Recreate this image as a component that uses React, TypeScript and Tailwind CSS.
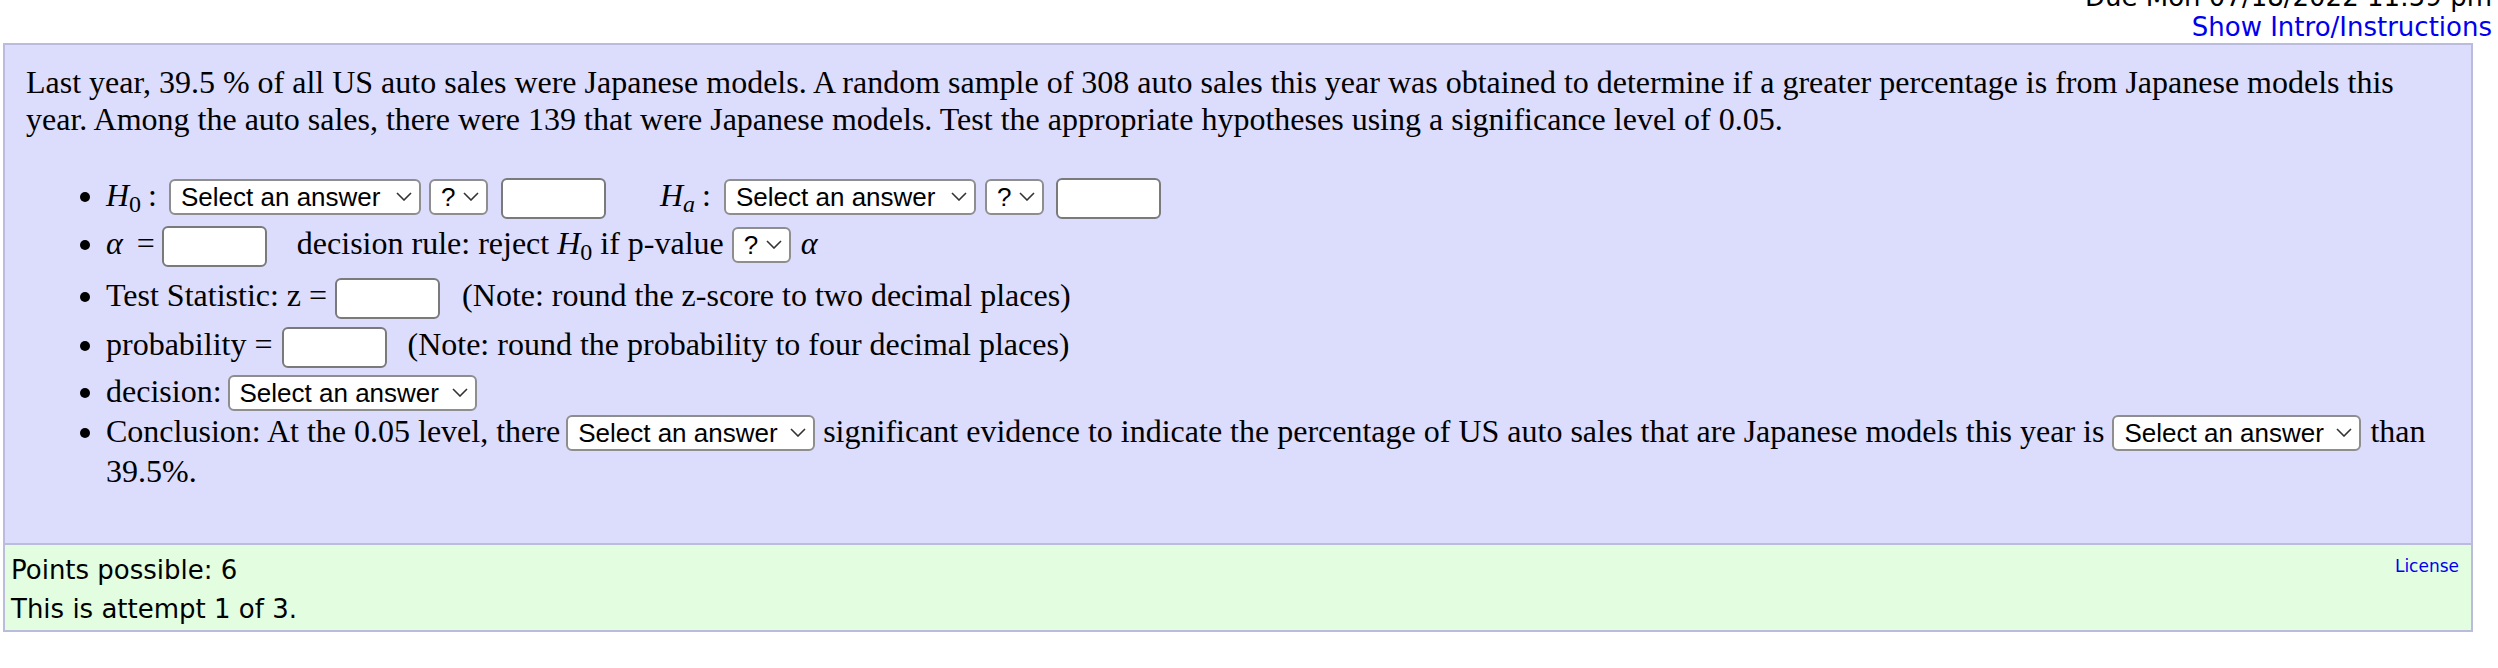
const serif = "font-['Liberation_Serif','Times_New_Roman',serif]"

function Chevron() {
  return (
    <svg width="16" height="9" viewBox="0 0 16 9" className="shrink-0">
      <polyline points="1,1 8,8 15,1" fill="none" stroke="#333" strokeWidth="1.6" />
    </svg>
  )
}

// mac-style select box, baseline aligned with the text around it
function Select({ q = false, wide = false, className = '' }: { q?: boolean; wide?: boolean; className?: string }) {
  const w = q ? 'w-[59px]' : wide ? 'w-[252px]' : 'w-[249px]'
  return (
    <span
      className={`inline-flex h-[36px] items-center justify-between rounded-[6px] border-2 border-[#8e8e8e] bg-white pl-[10px] pr-[7px] font-['Liberation_Sans',Arial,sans-serif] text-[26px] leading-[30px] text-black ${w} ${className}`}
    >
      <span>{q ? '?' : 'Select an answer'}</span>
      <Chevron />
    </span>
  )
}

function Input({ className = '' }: { className?: string }) {
  return (
    <span
      className={`inline-block h-[41px] w-[105px] rounded-[6px] border-2 border-[#7a7a7a] bg-white align-[-13px] ${className}`}
    />
  )
}

export default function App() {
  return (
    <div className="min-h-[668px] bg-white font-['DejaVu_Sans',Verdana,sans-serif] text-black">
      {/* header, scrolled so the due date is mostly cut off */}
      <div className="-mt-[18px] pr-[6px] text-right text-[26px] leading-[30px]">
        <div>Due Mon 07/18/2022 11:59 pm</div>
        <a className="text-[#0000ee]">Show Intro/Instructions</a>
      </div>

      <div className="ml-[3px] mt-[1px] w-[2470px]">
        {/* question */}
        <div className={`border-2 border-[#bbbbdd] bg-[#dcdcfc] pb-[52px] pl-[21px] pr-[21px] pt-[19px] text-[32px] ${serif}`}>
          <p className="leading-[36.8px]">
            Last year, 39.5 % of all US auto sales were Japanese models. A random sample of 308 auto sales this year
            was obtained to determine if a greater percentage is from Japanese models this year. Among the auto sales,
            there were 139 that were Japanese models. Test the appropriate hypotheses using a significance level of
            0.05.
          </p>

          <ul className="mt-[39px] list-disc pl-[80px]">
            <li className="leading-[36px]">
              <span className="italic">H</span><sub>0</sub><span className="ml-[7px]">:</span>
              <Select wide className="ml-[12px]" />
              <Select q className="ml-[8px]" />
              <Input className="ml-[13px]" />
              <span className="ml-[54px] italic">H</span><sub className="italic">a</sub><span className="ml-[7px]">:</span>
              <Select wide className="ml-[13px]" />
              <Select q className="ml-[9px]" />
              <Input className="ml-[12px]" />
            </li>
            <li className="mt-[6px] leading-[36px]">
              <span className="italic">α</span><span className="ml-[14px]">=</span>
              <Input className="ml-[7px]" />
              <span className="ml-[30px]">
                decision rule: reject <span className="italic">H</span><sub>0</sub> if p-value
              </span>
              <Select q className="ml-[8px]" />
              <span className="ml-[10px] italic">α</span>
            </li>
            <li className="mt-[10px] leading-[36px]">
              Test Statistic: z =
              <Input className="ml-[8px]" />
              <span className="ml-[22px]">(Note: round the z-score to two decimal places)</span>
            </li>
            <li className="mt-[7px] leading-[36px]">
              probability =
              <Input className="ml-[10px]" />
              <span className="ml-[20px]">(Note: round the probability to four decimal places)</span>
            </li>
            <li className="mt-[5px] leading-[36px]">
              decision:
              <Select className="ml-[6px]" />
            </li>
            <li className="leading-[40px]">
              Conclusion: At the 0.05 level, there
              <Select className="ml-[6px]" />
              <span className="ml-[8px]">
                significant evidence to indicate the percentage of US auto sales that are Japanese models this year is
              </span>
              <Select className="ml-[8px]" />
              <span className="ml-[9px]">than</span> 39.5%.
            </li>
          </ul>
        </div>

        {/* footer */}
        <div className="flex justify-between border-x-2 border-b-2 border-[#bbbbdd] bg-[#e3fde0] pb-[1px] pl-[6px] pr-[12px] pt-[6px] text-[26px] leading-[39px]">
          <div>
            <div>Points possible: 6</div>
            <div>This is attempt 1 of 3.</div>
          </div>
          <a className="mt-[5px] text-[17px] leading-[20px] text-[#0000ee]">License</a>
        </div>
      </div>
    </div>
  )
}
